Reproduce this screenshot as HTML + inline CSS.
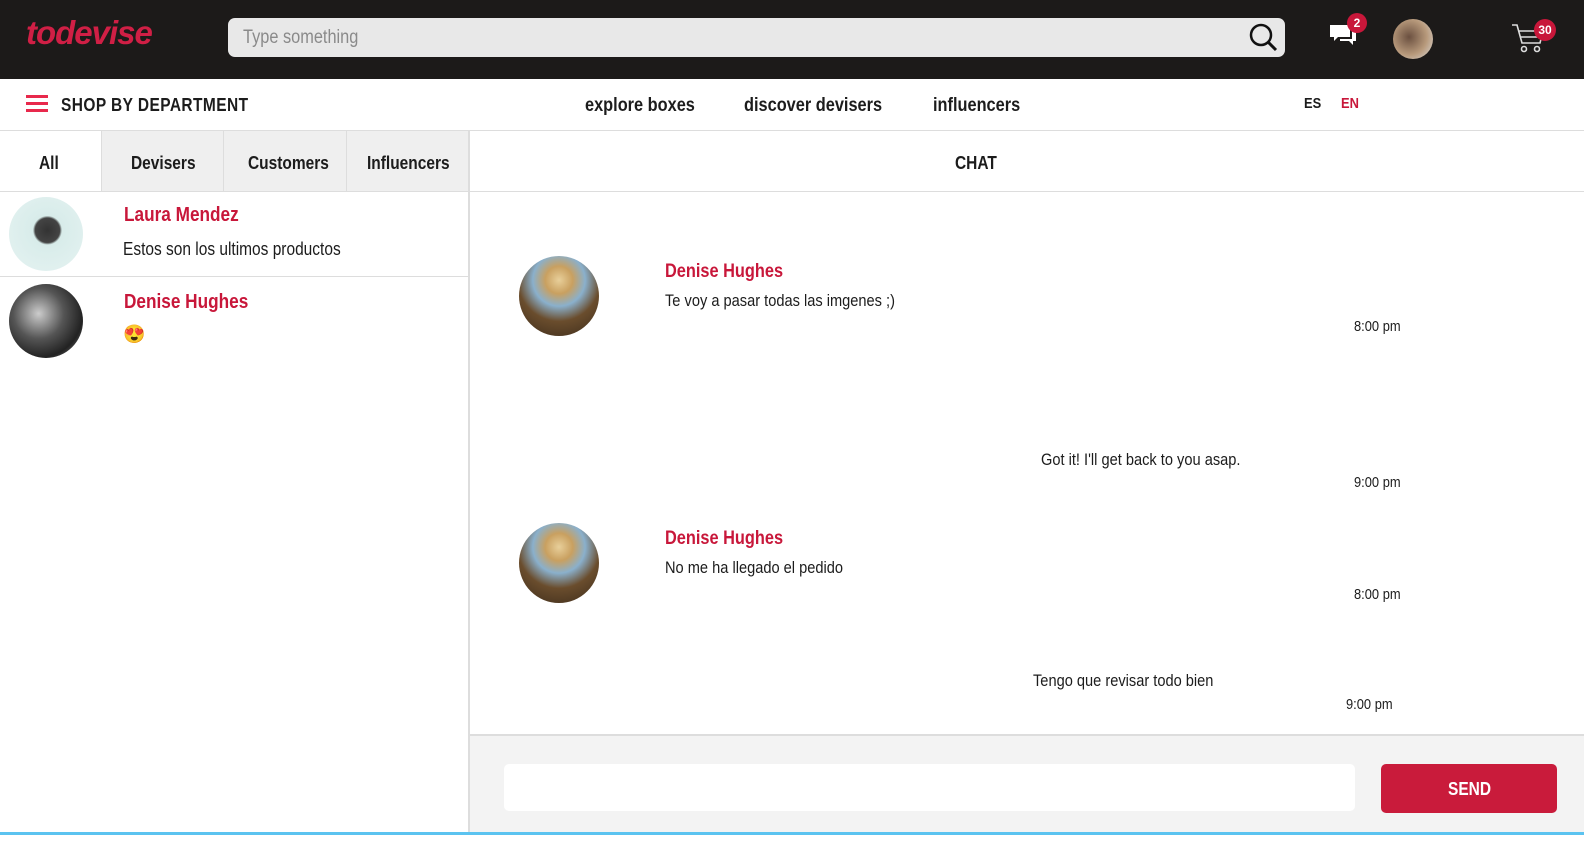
<!DOCTYPE html>
<html><head><meta charset="utf-8"><style>
*{margin:0;padding:0;box-sizing:border-box}
body{width:1584px;height:844px;position:relative;overflow:hidden;background:#fff;font-family:"Liberation Sans",sans-serif;color:#1c1c1c}
.a{position:absolute;white-space:nowrap}
.n{transform:scaleX(.86);transform-origin:0 0}
.red{color:#c8173a}
.b{font-weight:bold}
.av{position:absolute;border-radius:50%;overflow:hidden}
</style></head><body>
<div class="a" style="left:0;top:0;width:1584px;height:79px;background:#1c1a19"></div>
<div class="a b" style="left:26px;top:14px;font-size:33px;font-style:italic;color:#d01f45;letter-spacing:-1px">todevise</div>
<div class="a" style="left:228px;top:18px;width:1057px;height:39px;background:#e8e8e8;border-radius:7px"></div>
<div class="a n" style="left:243px;top:27px;font-size:19px;color:#8a8a8a">Type something</div>
<svg class="a" style="left:1248px;top:22px" width="30" height="30" viewBox="0 0 30 30"><circle cx="13" cy="13" r="10" fill="none" stroke="#111" stroke-width="2.5"/><line x1="20" y1="20" x2="28" y2="28" stroke="#111" stroke-width="3"/></svg>
<svg class="a" style="left:1328px;top:22px" width="32" height="28" viewBox="0 0 32 28"><path d="M2 3h20v12H10l-4 4v-4H2z" fill="#fff"/><path d="M24 7h4v12h-3v4l-4-4h-9v-2h12z" fill="#fff"/></svg>
<div class="a b" style="left:1347px;top:13px;width:20px;height:20px;border-radius:50%;background:#c8173a;color:#fff;font-size:12px;text-align:center;line-height:20px">2</div>
<div class="av" style="left:1393px;top:19px;width:40px;height:40px;background:radial-gradient(circle at 40% 45%,#6b5040,#b89a7c 55%,#ddd)"></div>
<svg class="a" style="left:1510px;top:22px" width="34" height="32" viewBox="0 0 34 32" fill="none" stroke="#ddd" stroke-width="1.6"><path d="M2 3h5l5 18h18l3-12H9"/><path d="M11 15h20"/><circle cx="14" cy="27" r="2.5"/><circle cx="27" cy="27" r="2.5"/></svg>
<div class="a b" style="left:1534px;top:19px;width:22px;height:22px;border-radius:50%;background:#c8173a;color:#fff;font-size:12px;text-align:center;line-height:22px">30</div>

<div class="a" style="left:26px;top:95px;width:22px;height:3px;background:#e8294c;box-shadow:0 7px 0 #e8294c,0 14px 0 #e8294c"></div>
<div class="a b n" style="left:61px;top:95px;font-size:18px;letter-spacing:.5px">SHOP BY DEPARTMENT</div>
<div class="a b n" style="left:585px;top:95px;font-size:19px">explore boxes</div>
<div class="a b n" style="left:744px;top:95px;font-size:19px">discover devisers</div>
<div class="a b n" style="left:933px;top:95px;font-size:19px">influencers</div>
<div class="a b n" style="left:1304px;top:95px;font-size:15px">ES</div>
<div class="a b red n" style="left:1341px;top:95px;font-size:15px">EN</div>

<div class="a" style="left:0;top:130px;width:1584px;height:1px;background:#ddd"></div>
<div class="a" style="left:102px;top:131px;width:366px;height:60px;background:#efefef"></div>
<div class="a" style="left:101px;top:131px;width:1px;height:60px;background:#ddd"></div>
<div class="a" style="left:223px;top:131px;width:1px;height:60px;background:#ddd"></div>
<div class="a" style="left:346px;top:131px;width:1px;height:60px;background:#ddd"></div>
<div class="a" style="left:468px;top:131px;width:2px;height:703px;background:#ddd"></div>
<div class="a" style="left:0;top:191px;width:1584px;height:1px;background:#ddd"></div>
<div class="a b n" style="left:39px;top:153px;font-size:18px">All</div>
<div class="a b n" style="left:131px;top:153px;font-size:18px">Devisers</div>
<div class="a b n" style="left:248px;top:153px;font-size:18px">Customers</div>
<div class="a b n" style="left:367px;top:153px;font-size:18px">Influencers</div>
<div class="a b n" style="left:955px;top:153px;font-size:18px">CHAT</div>

<div class="a" style="left:0;top:276px;width:468px;height:1px;background:#ddd"></div>
<div class="av" style="left:9px;top:197px;width:74px;height:74px;background:radial-gradient(circle at 52% 45%,#333 0,#444 22%,#d8ecea 26%,#e6f3f2)"></div>
<div class="av" style="left:9px;top:284px;width:74px;height:74px;background:radial-gradient(circle at 40% 40%,#ccc,#555 40%,#222 70%,#999)"></div>
<div class="a b red n" style="left:124px;top:204px;font-size:20px">Laura Mendez</div>
<div class="a n" style="left:123px;top:239px;font-size:18px">Estos son los ultimos productos</div>
<div class="a b red n" style="left:124px;top:291px;font-size:20px">Denise Hughes</div>
<div class="a" style="left:123px;top:324px;font-size:18px">😍</div>

<div class="av" style="left:519px;top:256px;width:80px;height:80px;background:radial-gradient(circle at 50% 30%,#e8cf9a 0,#c9a060 20%,#8ab0cc 38%,#6a4d2d 60%,#3a2a1a)"></div>
<div class="a b red n" style="left:665px;top:261px;font-size:19px">Denise Hughes</div>
<div class="a n" style="left:665px;top:291px;font-size:17px">Te voy a pasar todas las imgenes ;)</div>
<div class="a n" style="left:1354px;top:318px;font-size:15px">8:00 pm</div>
<div class="a n" style="left:1041px;top:450px;font-size:17px">Got it! I'll get back to you asap.</div>
<div class="a n" style="left:1354px;top:474px;font-size:15px">9:00 pm</div>
<div class="av" style="left:519px;top:523px;width:80px;height:80px;background:radial-gradient(circle at 50% 30%,#e8cf9a 0,#c9a060 20%,#8ab0cc 38%,#6a4d2d 60%,#3a2a1a)"></div>
<div class="a b red n" style="left:665px;top:528px;font-size:19px">Denise Hughes</div>
<div class="a n" style="left:665px;top:558px;font-size:17px">No me ha llegado el pedido</div>
<div class="a n" style="left:1354px;top:586px;font-size:15px">8:00 pm</div>
<div class="a n" style="left:1033px;top:671px;font-size:17px">Tengo que revisar todo bien</div>
<div class="a n" style="left:1346px;top:696px;font-size:15px">9:00 pm</div>

<div class="a" style="left:470px;top:734px;width:1114px;height:100px;background:#f3f3f3;border-top:2px solid #ddd"></div>
<div class="a" style="left:504px;top:764px;width:851px;height:47px;background:#fff;border-radius:5px"></div>
<div class="a" style="left:1381px;top:764px;width:176px;height:49px;background:#c91b3b;border-radius:5px"></div>
<div class="a b n" style="left:1448px;top:779px;font-size:18px;color:#fff">SEND</div>
<div class="a" style="left:0;top:832px;width:1584px;height:3px;background:#5bc3f0"></div>
</body></html>
